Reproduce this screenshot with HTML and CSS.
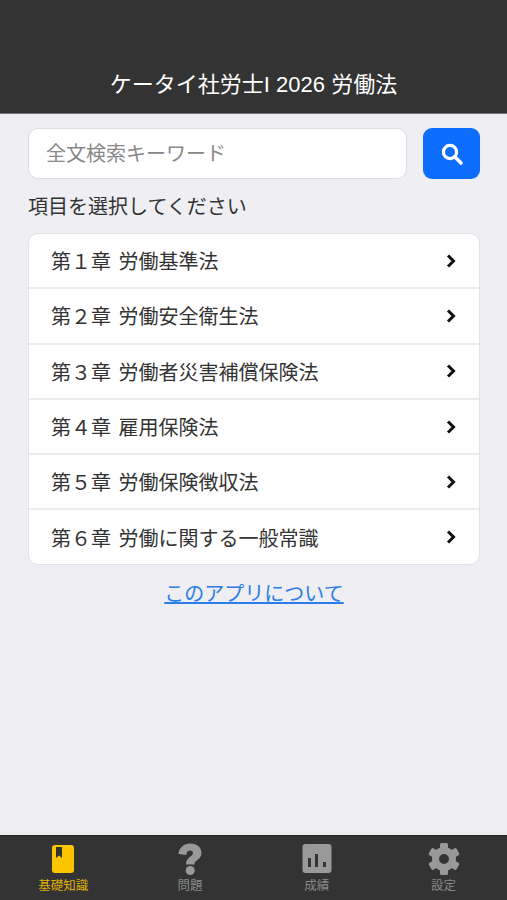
FILE: index.html
```html
<!DOCTYPE html>
<html lang="ja">
<head>
<meta charset="utf-8" />
<title>ケータイ社労士</title>
<link rel="stylesheet" href="styles.css">
</head>
<body>
	<div class="app">
		<div class="top_bar">ケータイ社労士I 2026 労働法</div>
		<div class="main">
			<div class="search">
				<div class="search_box">全文検索キーワード</div>
				<div class="search_btn">
					<svg width="24" height="24" viewBox="0 0 24 24"><circle cx="10" cy="10" r="6.6" fill="none" stroke="#fff" stroke-width="3.2"/><path d="M15 15l6 6" stroke="#fff" stroke-width="3.6" stroke-linecap="round"/></svg>
				</div>
			</div>
			<p class="lead">項目を選択してください</p>
			<ul class="list">
				<li>第１章 労働基準法<svg class="arrow" width="12" height="16" viewBox="0 0 12 16"><path d="M3 2.5L8.5 8L3 13.5" fill="none" stroke="#111" stroke-width="3"/></svg></li>
				<li>第２章 労働安全衛生法<svg class="arrow" width="12" height="16" viewBox="0 0 12 16"><path d="M3 2.5L8.5 8L3 13.5" fill="none" stroke="#111" stroke-width="3"/></svg></li>
				<li>第３章 労働者災害補償保険法<svg class="arrow" width="12" height="16" viewBox="0 0 12 16"><path d="M3 2.5L8.5 8L3 13.5" fill="none" stroke="#111" stroke-width="3"/></svg></li>
				<li>第４章 雇用保険法<svg class="arrow" width="12" height="16" viewBox="0 0 12 16"><path d="M3 2.5L8.5 8L3 13.5" fill="none" stroke="#111" stroke-width="3"/></svg></li>
				<li>第５章 労働保険徴収法<svg class="arrow" width="12" height="16" viewBox="0 0 12 16"><path d="M3 2.5L8.5 8L3 13.5" fill="none" stroke="#111" stroke-width="3"/></svg></li>
				<li>第６章 労働に関する一般常識<svg class="arrow" width="12" height="16" viewBox="0 0 12 16"><path d="M3 2.5L8.5 8L3 13.5" fill="none" stroke="#111" stroke-width="3"/></svg></li>
			</ul>
			<a class="about" href="#">このアプリについて</a>
		</div>
		<div class="tabs">
			<div class="tab on">
				<svg width="36" height="32" viewBox="0 0 36 32"><rect x="7" y="2" width="22" height="28" rx="3" fill="#fdc400"/><path d="M11 4h6v11l-3-2.5l-3 2.5z" fill="#333"/></svg>
				<span>基礎知識</span>
			</div>
			<div class="tab">
				<svg width="36" height="32" viewBox="0 0 36 32"><path d="M6.5 11C7 5 11.5 0.5 18.5 0.5C25 0.5 29.5 4.5 29.5 10C29.5 17 22.5 16.5 22.5 21.5H14C14 13.5 21 14 21 10C21 8.5 20 7.5 18 7.5C16 7.5 14.5 9 14.2 12Z" fill="#999"/><circle cx="18.2" cy="27.5" r="4.5" fill="#999"/></svg>
				<span>問題</span>
			</div>
			<div class="tab">
				<svg width="36" height="32" viewBox="0 0 36 32"><rect x="3.5" y="1" width="29" height="29" rx="3" fill="#999"/><path d="M9 15h3v9h-3zM16 11h3v13h-3zM24 19h3v5h-3z" fill="#333"/></svg>
				<span>成績</span>
			</div>
			<div class="tab">
				<svg width="36" height="32" viewBox="0 0 36 32"><circle cx="18" cy="16" r="8.5" fill="none" stroke="#999" stroke-width="7"/><g fill="#999"><rect x="14" y="0" width="8" height="8" rx="1.5"/><rect x="14" y="0" width="8" height="8" rx="1.5" transform="rotate(60 18 16)"/><rect x="14" y="0" width="8" height="8" rx="1.5" transform="rotate(120 18 16)"/><rect x="14" y="0" width="8" height="8" rx="1.5" transform="rotate(180 18 16)"/><rect x="14" y="0" width="8" height="8" rx="1.5" transform="rotate(240 18 16)"/><rect x="14" y="0" width="8" height="8" rx="1.5" transform="rotate(300 18 16)"/></g></svg>
				<span>設定</span>
			</div>
		</div>
	</div>
</body>
</html>
```

FILE: styles.css
```css
*{ padding:0; margin:0; box-sizing:border-box; }
body{ background:#eeeef3; font-family:"Liberation Sans","Noto Sans CJK JP",sans-serif; }
.app{ width:507px; height:900px; display:flex; flex-direction:column; overflow:hidden; }

.top_bar{ height:114px; padding-top:71px; background:#333; border-bottom:1px solid #777; color:#fff; font-size:22px; line-height:28px; text-align:center; }

.main{ flex:1; padding:14px 27px 0 28px; }
.search{ display:flex; justify-content:space-between; }
.search_box{ width:379px; height:51px; padding-left:17px; background:#fff; border:1px solid #dcdce2; border-radius:10px; color:#888; font-size:20px; line-height:50px; }
.search_btn{ width:57px; height:51px; background:#0d6efd; border-radius:9px; display:flex; align-items:center; justify-content:center; }
.lead{ margin-top:14px; color:#333; font-size:20px; line-height:29px; }

.list{ margin-top:11px; background:#fff; border:1px solid #e2e2e8; border-radius:10px; list-style:none; }
.list li{ height:55.3px; padding:0 22px; display:flex; align-items:center; justify-content:space-between; color:#333; font-size:20px; word-spacing:2px; border-bottom:2px solid #ececf0; }
.list li:last-child{ height:53.5px; border-bottom:0; }
.arrow{ flex:none; }

.about{ display:block; margin-top:14px; color:#2b7de9; font-size:20px; line-height:30px; text-align:center; }

.tabs{ height:65px; background:#333; border-top:1px solid #222; display:flex; }
.tab{ flex:1; padding-top:7px; display:flex; flex-direction:column; align-items:center; color:#888; font-size:12.5px; line-height:16px; }
.tab span{ margin-top:3px; }
.tab.on{ color:#e0ae0a; }
```
